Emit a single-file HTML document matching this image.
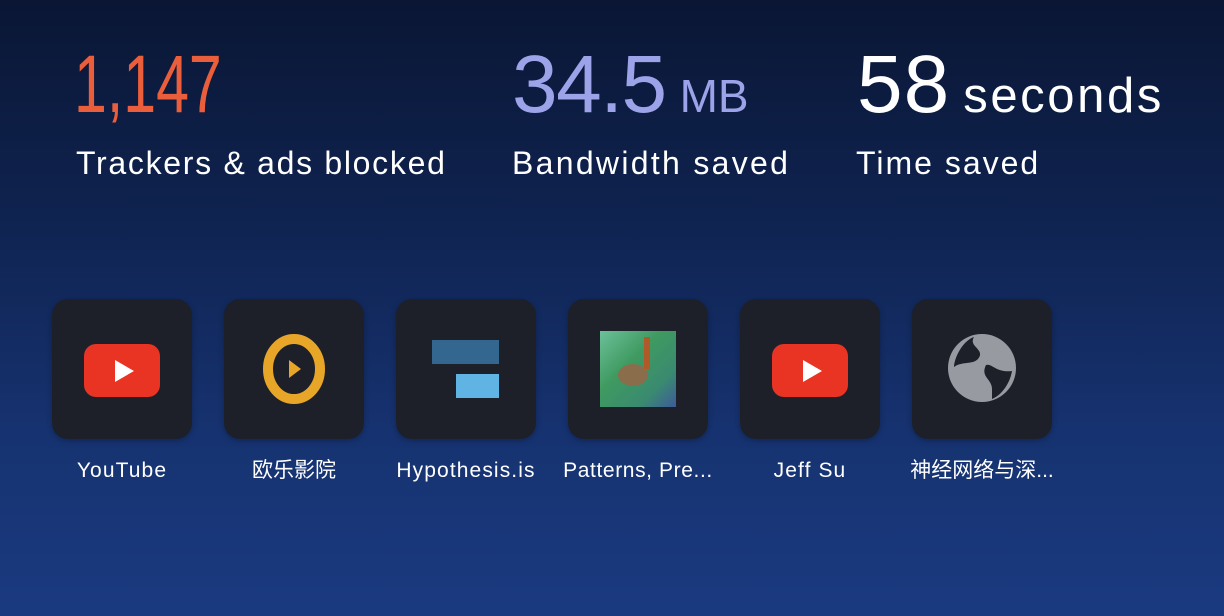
<!DOCTYPE html>
<html><head><meta charset="utf-8"><style>
html,body{margin:0;padding:0}
body{width:1224px;height:616px;overflow:hidden;position:relative;
background:linear-gradient(180deg,#0a1634 0%,#0f2350 35%,#163270 70%,#1a3a80 100%);
font-family:"Liberation Sans","Noto Sans CJK SC",sans-serif;color:#fff}
.num{position:absolute;top:40px;font-size:82px;line-height:90px;white-space:nowrap}
.lab{position:absolute;top:143px;font-size:32px;line-height:40px;white-space:nowrap}
.unit{font-size:46px;letter-spacing:0}
.tile{position:absolute;top:299px;width:140px;height:140px;border-radius:16px;background:#1d2029;box-shadow:0 2px 6px rgba(0,0,0,.25)}
.tl{position:absolute;top:458px;width:172px;text-align:center;font-size:21px;line-height:26px;white-space:nowrap;letter-spacing:1.1px}
.yt{position:absolute;left:32px;top:45px;width:76px;height:53px;background:#e93323;border-radius:12px}
.yt:after{content:"";position:absolute;left:31px;top:16px;border-left:19px solid #fff;border-top:11px solid transparent;border-bottom:11px solid transparent}
</style></head><body>
<div class="num" style="left:74px;color:#ea5e3b;"><span style="display:inline-block;transform:scaleX(0.72);transform-origin:left">1,147</span></div>
<div class="num" style="left:512px;color:#9ca3e8;letter-spacing:-1.5px">34.5<span class="unit" style="margin-left:14px">MB</span></div>
<div class="num" style="left:857px;color:#fff;letter-spacing:1px">58<span class="unit" style="font-size:49px;letter-spacing:2.6px;margin-left:13px">seconds</span></div>
<div class="lab" style="left:76px;letter-spacing:1.7px">Trackers &amp; ads blocked</div>
<div class="lab" style="left:512px;letter-spacing:2.3px">Bandwidth saved</div>
<div class="lab" style="left:856px;letter-spacing:2px">Time saved</div>

<div class="tile" style="left:52px"><div class="yt"></div></div>
<div class="tile" style="left:224px">
<svg width="140" height="140" style="position:absolute;left:0;top:0"><ellipse cx="70" cy="70" rx="26" ry="30" fill="none" stroke="#e8a628" stroke-width="10"/><path d="M65 61 L77 70 L65 79Z" fill="#e8a628"/></svg></div>
<div class="tile" style="left:396px"><div style="position:absolute;left:36px;top:41px;width:67px;height:24px;background:#336790"></div><div style="position:absolute;left:60px;top:75px;width:43px;height:24px;background:#60b4e4"></div></div>
<div class="tile" style="left:568px"><div style="position:absolute;left:32px;top:32px;width:76px;height:76px;background:linear-gradient(135deg,#6cc09a,#3f9a60 40%,#3a8a70 75%,#3d5a9a)"><div style="position:absolute;left:18px;top:33px;width:30px;height:22px;border-radius:50%;background:#8a6e4c"></div><div style="position:absolute;left:44px;top:6px;width:6px;height:32px;background:#b05a2a"></div></div></div>
<div class="tile" style="left:740px"><div class="yt"></div></div>
<div class="tile" style="left:912px">
<svg width="140" height="140" style="position:absolute;left:0;top:0"><circle cx="70" cy="69" r="34" fill="#979ba1"/><path d="M62 38 C56 48 74 50 66 60 C60 66 50 62 42 68 C42 60 50 42 62 38Z M74 66 C80 64 84 74 100 72 C98 84 90 96 80 100 L80 90 C80 80 68 78 74 66Z" fill="#1d2029"/></svg></div>

<div class="tl" style="left:36px">YouTube</div>
<div class="tl" style="left:208px;letter-spacing:0">欧乐影院</div>
<div class="tl" style="left:380px">Hypothesis.is</div>
<div class="tl" style="left:552px;letter-spacing:0.6px">Patterns, Pre...</div>
<div class="tl" style="left:724px">Jeff Su</div>
<div class="tl" style="left:896px;letter-spacing:0">神经网络与深...</div>
</body></html>
